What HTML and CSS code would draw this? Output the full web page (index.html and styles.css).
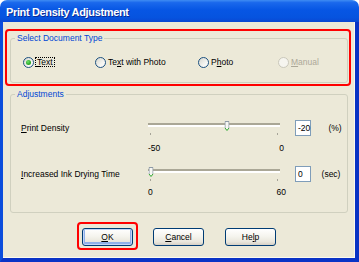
FILE: index.html
```html
<!DOCTYPE html>
<html lang="en">
<head>
    <meta charset="UTF-8">
    <meta name="viewport" content="width=device-width, initial-scale=1.0">
    <title>Print Density Adjustment</title>
    <link rel="stylesheet" href="styles.css">
</head>
<body>

    <div class="window">
        <div class="titlebar">Print Density Adjustment</div>
        <div class="frame">

            <div class="mark mark-group">
                <fieldset class="group group-type">
                    <legend>Select Document Type</legend>
                    <div class="radios">
                        <label class="radio checked"><span class="dot"></span><span class="focus"><u>T</u>ext</span></label>
                        <label class="radio"><span class="dot"></span><span>Te<u>x</u>t with Photo</span></label>
                        <label class="radio"><span class="dot"></span><span>P<u>h</u>oto</span></label>
                        <label class="radio disabled"><span class="dot"></span><span><u>M</u>anual</span></label>
                    </div>
                </fieldset>
            </div>

            <fieldset class="group group-adjust">
                <legend>Adjustments</legend>

                <div class="setting">
                    <span class="setting-label"><u>P</u>rint Density</span>
                    <div class="slider">
                        <div class="track"></div>
                        <div class="travel">
                            <svg class="thumb" style="left: 60%" width="5" height="10" viewBox="0 0 5 10">
                                <path d="M0.5 7 V0.5 H4.5 V7 L2.5 9.5 Z" fill="#f7f7f3"/>
                                <path d="M0.5 7 V0.5 H4.5 V7" fill="none" stroke="#8e9aa6" stroke-width="1"/>
                                <path d="M0.5 7 L2.5 9.5 L4.5 7" fill="none" stroke="#2ca62c" stroke-width="1"/>
                            </svg>
                        </div>
                        <div class="ticks"><i></i><i></i></div>
                    </div>
                    <span class="value">-20</span>
                    <span class="unit unit-pct">(%)</span>
                </div>
                <div class="scale scale-density"><span>-50</span><span>0</span></div>

                <div class="setting setting-drying">
                    <span class="setting-label"><u>I</u>ncreased Ink Drying Time</span>
                    <div class="slider">
                        <div class="track"></div>
                        <div class="travel">
                            <svg class="thumb" style="left: 0%" width="5" height="10" viewBox="0 0 5 10">
                                <path d="M0.5 7 V0.5 H4.5 V7 L2.5 9.5 Z" fill="#f7f7f3"/>
                                <path d="M0.5 7 V0.5 H4.5 V7" fill="none" stroke="#8e9aa6" stroke-width="1"/>
                                <path d="M0.5 7 L2.5 9.5 L4.5 7" fill="none" stroke="#2ca62c" stroke-width="1"/>
                            </svg>
                        </div>
                        <div class="ticks"><i></i><i></i></div>
                    </div>
                    <span class="value">0</span>
                    <span class="unit unit-sec">(sec)</span>
                </div>
                <div class="scale scale-drying"><span>0</span><span>60</span></div>
            </fieldset>

            <div class="buttons">
                <div class="mark mark-ok">
                    <button class="btn btn-default"><u>O</u>K</button>
                </div>
                <button class="btn btn-cancel"><u>C</u>ancel</button>
                <button class="btn btn-help">He<u>l</u>p</button>
            </div>

        </div>
    </div>

</body>
</html>
```

FILE: styles.css
```css
body {
    margin: 0;
    background-color: #ffffff;
    font-family: "Liberation Sans", Arial, sans-serif;
    font-size: 8.5px;
    color: #000000;
}

u {
    text-underline-offset: 1px;
}

.window {
    width: 359px;
    height: 262px;
    display: flex;
    flex-direction: column;
}

/* title bar */
.titlebar {
    height: 22px;
    box-sizing: border-box;
    padding: 3px 0 0 6px;
    line-height: 19px;
    border-radius: 7px 7px 0 0;
    background: linear-gradient(to bottom, #3f8cf3 0%, #1a68ec 12%, #0756e4 45%, #0653df 80%, #0a47d2 100%);
    color: #ffffff;
    font-weight: bold;
    font-size: 11px;
    letter-spacing: -0.35px;
    text-shadow: 1px 1px 0 #0b2a96;
}

.frame {
    flex: 1;
    display: flex;
    flex-direction: column;
    background-color: #ece9d8;
    border-left: 3px solid #0b4ddc;
    border-right: 4px solid #0832c4;
    border-bottom: 4px solid #0a33c6;
    box-shadow: inset -1px -1px 0 #fbf9ee;
}

/* red annotation boxes */
.mark {
    border: 2px solid #ff0000;
    border-radius: 4px;
}

.mark-group {
    margin: 7px 4px 0 2px;
    padding: 2px 1px 1px 3px;
}

.mark-ok {
    padding: 4px 3px 2px 3px;
    margin-left: 74px;
}

/* group boxes */
.group {
    margin: 0;
    min-width: 0;
    border: 1px solid #d0d0bf;
    border-radius: 3px;
}

.group legend {
    padding: 0 2px;
    line-height: 10px;
    color: #0046d5;
}

.group-type {
    padding: 13px 0 14px 12px;
}

.group-type legend {
    margin-left: -8px;
}

.group-adjust {
    margin: 3px 7px 0 7px;
    padding: 20px 0 15px 10px;
}

.group-adjust legend {
    margin-left: -6px;
}

/* radio buttons */
.radios {
    display: grid;
    grid-template-columns: 72px 103px 80px auto;
    line-height: 12px;
}

.radio {
    display: flex;
    align-items: center;
    gap: 2px;
}

.dot {
    width: 11px;
    height: 11px;
    box-sizing: border-box;
    border: 1px solid #1c5180;
    border-radius: 50%;
    background: linear-gradient(135deg, #d6d6ce 0%, #f4f4f0 60%, #ffffff 100%);
    display: flex;
    align-items: center;
    justify-content: center;
}

.checked .dot::after {
    content: "";
    width: 5px;
    height: 5px;
    border-radius: 50%;
    background: radial-gradient(circle at 40% 35%, #6fe06b 0%, #2eae2b 55%, #1f8a1f 100%);
}

.focus {
    margin-left: -1px;
    padding: 0 1px;
    line-height: 8px;
    border: 1px dotted #000000;
}

.disabled {
    color: #aca899;
}

.disabled .dot {
    border-color: #cac8bb;
    background: #f6f5ef;
}

/* slider rows */
.setting {
    display: grid;
    grid-template-columns: 127px 132px auto auto;
    align-items: center;
    height: 18px;
}

.setting-drying {
    margin-top: 12px;
}

.slider {
    position: relative;
    height: 18px;
}

.track {
    margin-top: 4px;
    height: 2px;
    background-color: #aaa796;
    border-bottom: 2px solid #ffffff;
}

.travel {
    position: absolute;
    top: 2px;
    left: 2.5px;
    right: 2.5px;
    height: 10px;
}

.thumb {
    position: absolute;
    top: 0;
    transform: translateX(-50%);
}

.ticks {
    display: flex;
    justify-content: space-between;
    margin: 6px 2px 0 2px;
}

.ticks i {
    width: 1px;
    height: 2px;
    background-color: #a6a498;
}

.value {
    margin-left: 15px;
    width: 16px;
    height: 16px;
    box-sizing: border-box;
    border: 1px solid #7f9db9;
    background-color: #ffffff;
    padding: 0 2px;
    line-height: 14px;
    white-space: nowrap;
}

.unit-pct {
    margin-left: 12px;
}

.unit-sec {
    margin-left: 4px;
}

.scale {
    display: flex;
    justify-content: space-between;
    margin-left: 127px;
    line-height: 10px;
}

.scale-density {
    width: 136px;
    margin-top: 6px;
}

.scale-drying {
    width: 138px;
    margin-top: 4px;
}

/* buttons */
.buttons {
    display: flex;
    align-items: flex-start;
    margin-top: 9px;
}

.btn {
    width: 51px;
    height: 18px;
    box-sizing: border-box;
    padding: 0;
    border: 1px solid #003c74;
    border-radius: 3px;
    background: linear-gradient(to bottom, #ffffff 0%, #f5f4ee 45%, #e9e6dc 80%, #d6d0c5 100%);
    font-family: inherit;
    font-size: 8.5px;
    line-height: 16px;
    color: #000000;
}

.btn-default {
    box-shadow: inset 0 0 0 1px #c3d6f7, inset 0 -1px 0 2px #8fb0ea;
}

.btn-cancel {
    margin: 6px 0 0 15px;
}

.btn-help {
    margin: 6px 0 0 21px;
}
```
